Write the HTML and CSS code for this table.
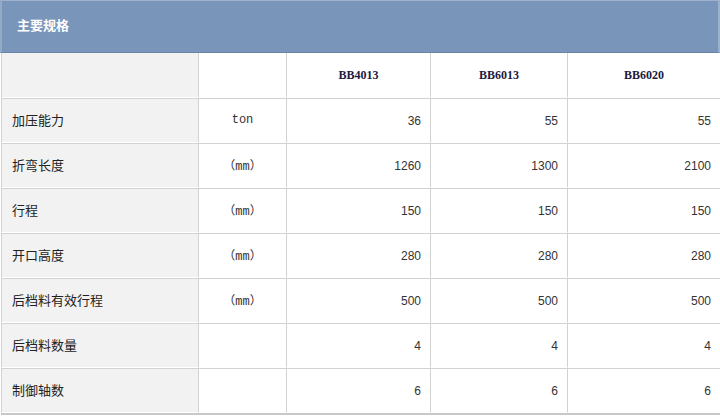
FILE: index.html
```html
<!DOCTYPE html>
<html lang="zh">
<head>
<meta charset="utf-8">
<link rel="stylesheet" href="styles.css">
</head>
<body>
<div class="wrap">
  <div class="bar">主要规格</div>
  <div class="grid">
    <div class="c lab first"></div>
    <div class="c unit first"></div>
    <div class="c model first">BB4013</div>
    <div class="c model first">BB6013</div>
    <div class="c model first">BB6020</div>

    <div class="c lab">加压能力</div>
    <div class="c unit">ton</div>
    <div class="c num">36</div>
    <div class="c num">55</div>
    <div class="c num">55</div>

    <div class="c lab">折弯长度</div>
    <div class="c unit">（mm）</div>
    <div class="c num">1260</div>
    <div class="c num">1300</div>
    <div class="c num">2100</div>

    <div class="c lab">行程</div>
    <div class="c unit">（mm）</div>
    <div class="c num">150</div>
    <div class="c num">150</div>
    <div class="c num">150</div>

    <div class="c lab">开口高度</div>
    <div class="c unit">（mm）</div>
    <div class="c num">280</div>
    <div class="c num">280</div>
    <div class="c num">280</div>

    <div class="c lab">后档料有效行程</div>
    <div class="c unit">（mm）</div>
    <div class="c num">500</div>
    <div class="c num">500</div>
    <div class="c num">500</div>

    <div class="c lab">后档料数量</div>
    <div class="c unit"></div>
    <div class="c num">4</div>
    <div class="c num">4</div>
    <div class="c num">4</div>

    <div class="c lab">制御轴数</div>
    <div class="c unit"></div>
    <div class="c num">6</div>
    <div class="c num">6</div>
    <div class="c num">6</div>
  </div>
</div>
</body>
</html>
```
FILE: styles.css
```css
html, body {
  margin: 0;
  padding: 0;
  background: #fff;
}
body {
  font-family: "Noto Sans CJK SC", "Liberation Sans", sans-serif;
  color: #333;
}
.wrap {
  width: 720px;
}
.bar {
  box-sizing: border-box;
  height: 53px;
  background: #7a95ba;
  border-top: 1px solid #9fb2cc;
  border-left: 2px solid #93a9c6;
  border-right: 2px solid #9cb1cd;
  border-bottom: 1px solid #6a83a6;
  color: #fff;
  font-weight: bold;
  font-size: 13px;
  line-height: 47px;
  padding-left: 15px;
}
.grid {
  display: grid;
  grid-template-columns: 197px 88px 144px 137px 153px;
  margin-left: 1px;
  border-bottom: 2px solid #c8c8c8;
}
.c {
  box-sizing: border-box;
  height: 45px;
  border-top: 1px solid #d2d2d2;
  border-left: 1px solid #d2d2d2;
  border-bottom: 1px solid #fff;
  display: flex;
  align-items: center;
  font-size: 12px;
  color: #333;
}
.c.first {
  border-top: 0;
}
.lab {
  background: #f2f2f2;
  padding-left: 10px;
  padding-bottom: 3px;
  font-size: 13px;
  color: #222;
}
.unit {
  justify-content: center;
  font-size: 12px;
  padding-bottom: 1px;
  font-family: "Liberation Mono", "Noto Sans CJK SC", monospace;
}
.num {
  justify-content: flex-end;
  padding-right: 9px;
  font-family: "Liberation Sans", sans-serif;
  font-size: 12px;
}
.model {
  justify-content: center;
  font-family: "Liberation Serif", serif;
  font-weight: bold;
  font-size: 12px;
  color: #1e1a40;
}
```
